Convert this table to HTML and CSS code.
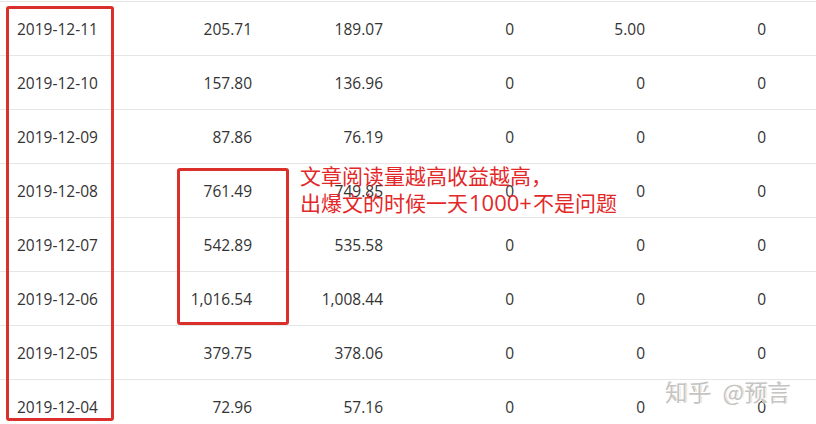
FILE: index.html
```html
<!DOCTYPE html>
<html lang="zh-CN">
<head>
    <meta charset="UTF-8">
    <meta name="viewport" content="width=device-width, initial-scale=1.0">
    <title>收益明细</title>
    <link rel="stylesheet" href="styles.css">
</head>
<body>
    <div class="sheet">
        <div class="row">
            <span class="date">2019-12-11</span><span>205.71</span><span>189.07</span><span>0</span><span>5.00</span><span>0</span>
        </div>
        <div class="row">
            <span class="date">2019-12-10</span><span>157.80</span><span>136.96</span><span>0</span><span>0</span><span>0</span>
        </div>
        <div class="row">
            <span class="date">2019-12-09</span><span>87.86</span><span>76.19</span><span>0</span><span>0</span><span>0</span>
        </div>
        <div class="row">
            <span class="date">2019-12-08</span><span>761.49</span><span>749.85</span><span>0</span><span>0</span><span>0</span>
        </div>
        <div class="row">
            <span class="date">2019-12-07</span><span>542.89</span><span>535.58</span><span>0</span><span>0</span><span>0</span>
        </div>
        <div class="row">
            <span class="date">2019-12-06</span><span>1,016.54</span><span>1,008.44</span><span>0</span><span>0</span><span>0</span>
        </div>
        <div class="row">
            <span class="date">2019-12-05</span><span>379.75</span><span>378.06</span><span>0</span><span>0</span><span>0</span>
        </div>
        <div class="row">
            <span class="date">2019-12-04</span><span>72.96</span><span>57.16</span><span>0</span><span>0</span><span>0</span>
        </div>

        <!-- annotations drawn on top of the screenshot -->
        <div class="mark mark-dates"></div>
        <div class="mark mark-income"></div>
        <p class="note">文章阅读量越高收益越高，<br>出爆文的时候一天<span class="note-num">1000+</span>不是问题</p>
        <div class="watermark">知乎 @预言</div>
    </div>
</body>
</html>
```

FILE: styles.css
```css
/* Basic page */
body {
    margin: 0;
    background-color: #fff;
    font-family: "Open Sans", "Noto Sans CJK SC", sans-serif;
    color: #333;
    overflow: hidden;
}
.sheet {
    position: relative;
    width: 816px;
    height: 424px;
    padding-top: 1px;
    box-sizing: border-box;
}
/* Table rows */
.row {
    display: grid;
    grid-template-columns: 123px 129px 131px 131px 131px 121px;
    align-items: center;
    height: 54px;
    box-sizing: border-box;
    border-top: 1px solid #e6e6e6;
    font-size: 15.5px;
}
.row span {
    text-align: right;
}
.row .date {
    text-align: left;
    padding-left: 17px;
}
/* Red annotation boxes */
.mark {
    position: absolute;
    border: 3px solid #d9302b;
    border-radius: 3px;
    box-sizing: border-box;
}
.mark-dates {
    left: 6px;
    top: 6px;
    width: 108px;
    height: 415px;
}
.mark-income {
    left: 177px;
    top: 168px;
    width: 112px;
    height: 157px;
}
.note {
    position: absolute;
    left: 300px;
    top: 162px;
    margin: 0;
    font-family: "Noto Sans CJK SC", sans-serif;
    font-size: 21px;
    line-height: 27px;
    color: #e3282a;
}
.note-num {
    font-family: "Open Sans", sans-serif;
    font-size: 22px;
    padding: 0 1px;
}
.watermark {
    position: absolute;
    left: 665px;
    top: 375px;
    font-family: "Noto Sans CJK SC", sans-serif;
    font-size: 22.5px;
    letter-spacing: 0.5px;
    word-spacing: 6px;
    color: #c4c4c4;
    text-shadow: 1px 1px 0 #fff, -1px -1px 0 #fff, 1px 0 1px #999;
}
```
